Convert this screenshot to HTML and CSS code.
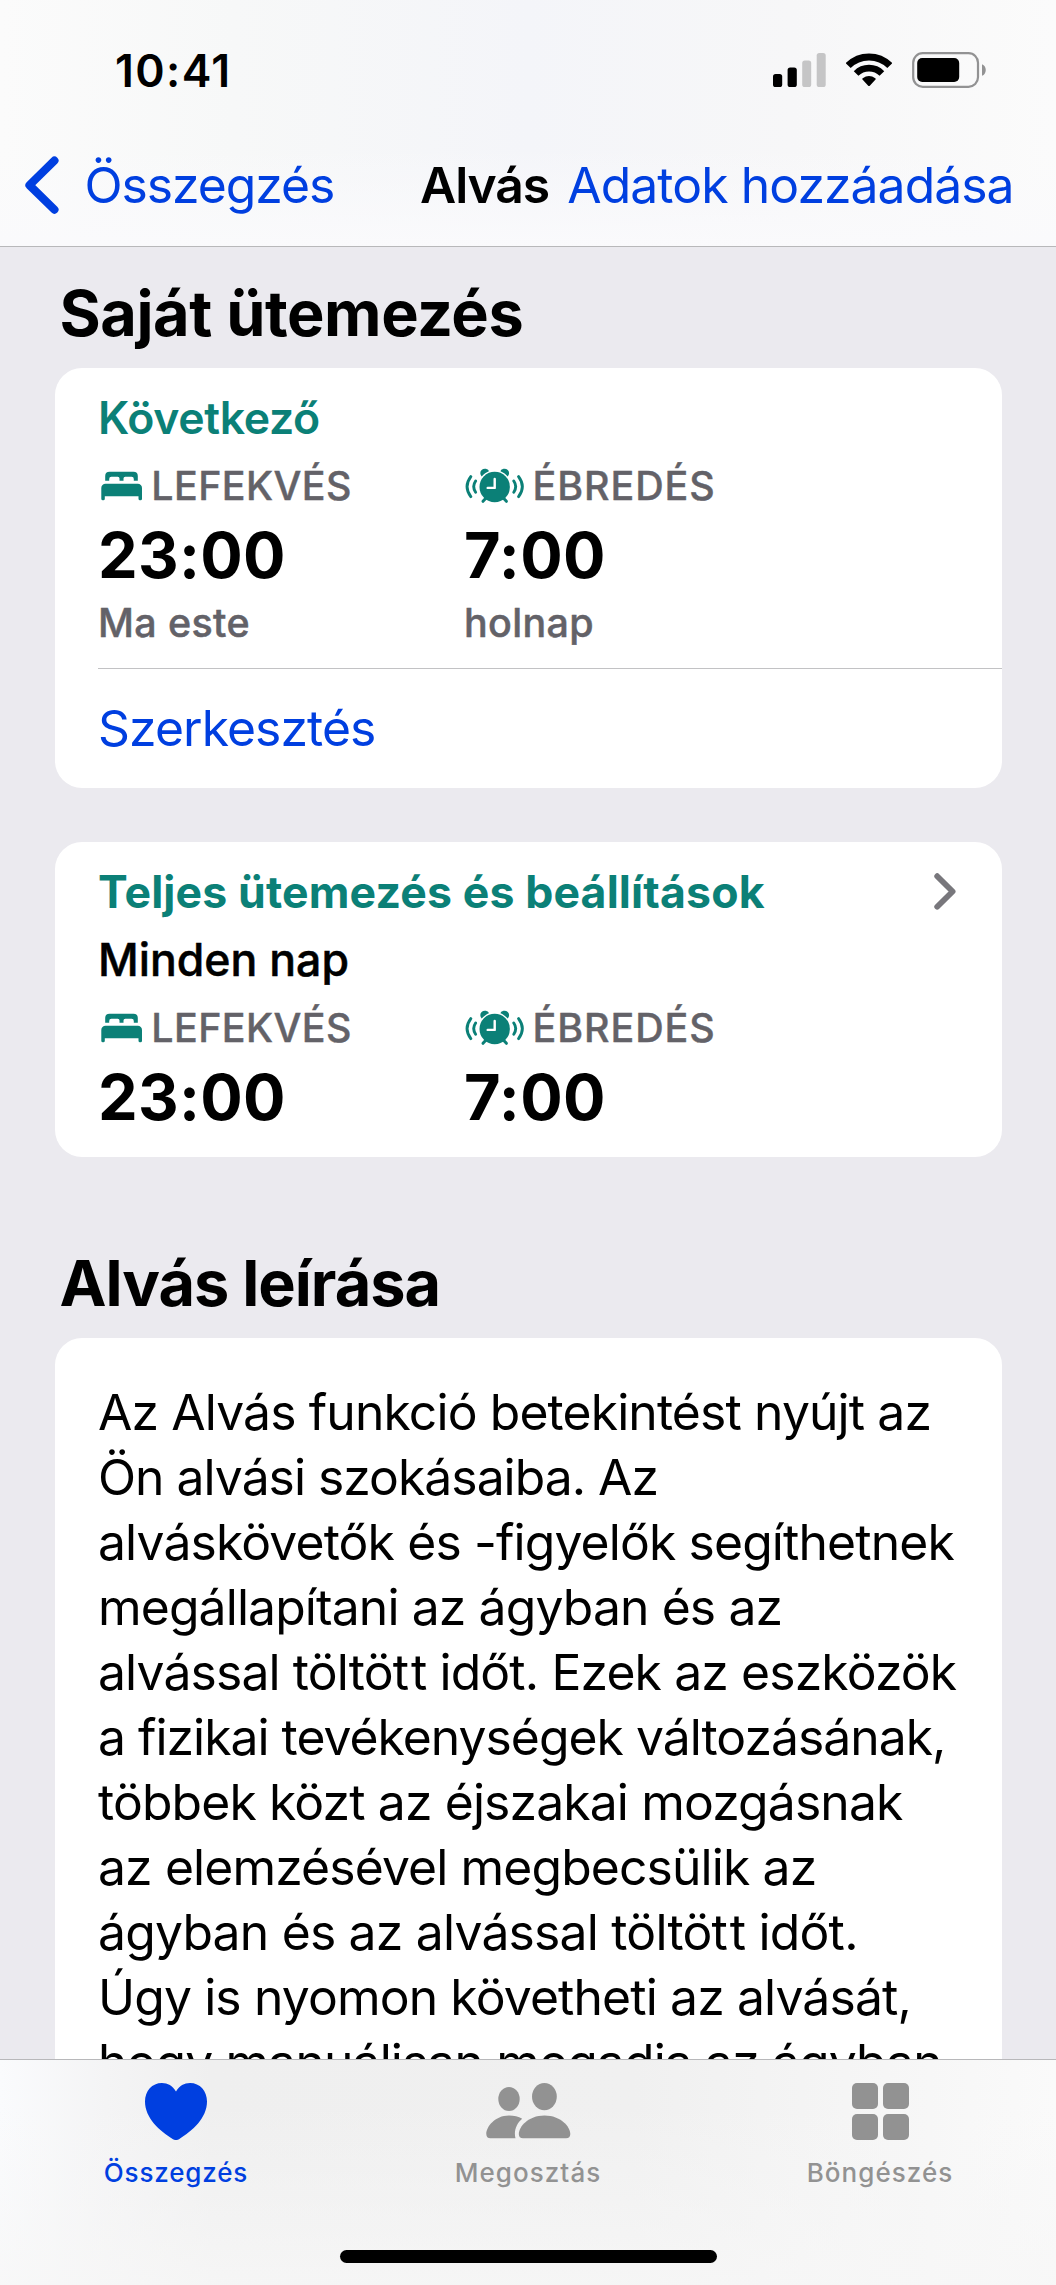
FILE: index.html
```
<!DOCTYPE html>
<html lang="hu">
<head>
<meta charset="utf-8">
<title>Alvás</title>
<link rel="stylesheet" href="styles.css">
</head>
<body>
<svg class="symbols" aria-hidden="true">
  <symbol id="bed" viewBox="0 0 42 30">
    <path fill="currentColor" d="M4.2 9.8V5A4.3 4.3 0 0 1 8.5.8h24A4.3 4.3 0 0 1 36.800 5v4.800h-4V7.900a2.200 2.200 0 0 0-2.200-2.200h-6.300a1.800 1.800 0 0 0-1.800 1.800v2.300h-4V7.500a1.800 1.800 0 0 0-1.800-1.800h-6.300a2.200 2.200 0 0 0-2.200 2.200v1.900z"/>
    <path fill="currentColor" d="M.3 17a4.200 4.200 0 0 1 4.200-4.200h32.300A4.200 4.200 0 0 1 41 17v10.700a1.500 1.500 0 0 1-1.500 1.500H39a1.500 1.500 0 0 1-1.500-1.500V25.300H3.800v2.400a1.500 1.500 0 0 1-1.500 1.500h-.5a1.500 1.500 0 0 1-1.500-1.500z"/>
  </symbol>
  <symbol id="alarm" viewBox="0 0 60 36">
    <g fill="none" stroke="currentColor" stroke-width="2.900" stroke-linecap="round">
      <path d="M5.800 8.600Q-1.700 18.600 5.800 28.700M10.600 13Q6.800 18.600 10.600 24.200M53.600 8.600Q61.100 18.600 53.600 28.700M48.800 13Q52.600 18.600 48.800 24.200"/>
      <path stroke-width="3" d="M20.600 30.500 18 33.300M38.800 30.500 41.400 33.300"/>
    </g>
    <g fill="currentColor">
      <circle cx="29.700" cy="19" r="15.200"/>
      <path d="M16.700 8.600C13 4 17.300-.6 22 1.200c1.100.4 1.800 1.200 1.900 2-2.600 1-5 2.800-7.200 5.400zM42.700 8.600C46.400 4 42.100-.6 37.400 1.200c-1.100.4-1.800 1.200-1.900 2 2.600 1 5 2.800 7.200 5.400z"/>
    </g>
    <path fill="none" stroke="#fff" stroke-width="2.400" stroke-linecap="round" stroke-linejoin="round" d="M29.700 11v8.900H22.700"/>
  </symbol>
</svg>

<div class="screen">
  <header class="header">
    <div class="status">
      <span class="clock">10:41</span>
      <div class="indicators">
        <svg width="53" height="36" viewBox="0 0 53 36">
          <rect x="0" y="22" width="9.200" height="13" rx="2.600"/>
          <rect x="14.600" y="15.500" width="9.200" height="19.500" rx="2.600"/>
          <rect x="29.200" y="8.500" width="9" height="26.500" rx="2.600" fill="#c5c5c6"/>
          <rect x="43.700" y="1" width="9" height="34" rx="2.600" fill="#c5c5c6"/>
        </svg>
        <svg width="46" height="36" viewBox="0 0 46 36">
          <g fill="none" stroke="#000">
            <path stroke-width="7" d="M2.200 13.600A29.400 29.400 0 0 1 43.800 13.600"/>
            <path stroke-width="6.600" d="M10.100 21.500A18.200 18.200 0 0 1 35.900 21.500"/>
          </g>
          <path d="M16.500 27.600Q15.700 26.800 16.700 26.200Q23 21.800 29.300 26.200Q30.300 26.800 29.500 27.600L23.800 33.700Q23 34.500 22.200 33.700z"/>
        </svg>
        <svg width="75" height="36" viewBox="0 0 75 36">
          <rect x="1.200" y="1.200" width="64.800" height="33.600" rx="9.500" fill="none" stroke="#929293" stroke-width="2.200"/>
          <rect x="5.200" y="6" width="42" height="24" rx="5"/>
          <path fill="#929293" d="M70 12.200c5 1.800 5 9.800 0 11.600z"/>
        </svg>
      </div>
    </div>
    <nav class="nav">
      <a class="back">
        <svg width="34" height="58" viewBox="0 0 34 58"><path d="M29.400 4.600 4.500 29.200 29.400 53.600" fill="none" stroke="currentColor" stroke-width="8.200" stroke-linecap="round" stroke-linejoin="round"/></svg>
        <span>Összegzés</span>
      </a>
      <h1 class="nav-title">Alvás</h1>
      <a class="add">Adatok hozzáadása</a>
    </nav>
  </header>

  <main class="content">
    <h2 class="heading">Saját ütemezés</h2>
    <section class="card">
      <div class="schedule">
        <h3 class="card-title next">Következő</h3>
        <div class="times">
          <div>
            <div class="label bedtime"><svg width="42" height="30"><use href="#bed"/></svg><span>LEFEKVÉS</span></div>
            <div class="time">23:00</div>
            <div class="day">Ma este</div>
          </div>
          <div>
            <div class="label wake"><svg width="60" height="36"><use href="#alarm"/></svg><span>ÉBREDÉS</span></div>
            <div class="time">7:00</div>
            <div class="day">holnap</div>
          </div>
        </div>
      </div>
      <a class="edit">Szerkesztés</a>
    </section>

    <section class="card full">
      <div class="title-row">
        <h3 class="card-title">Teljes ütemezés és beállítások</h3>
        <svg width="22" height="37" viewBox="0 0 22 37"><path d="M3.200 3.200 18.600 18.500 3.200 33.700" fill="none" stroke="#78777c" stroke-width="5.800" stroke-linecap="round" stroke-linejoin="round"/></svg>
      </div>
      <div class="repeat">Minden nap</div>
      <div class="times">
        <div>
          <div class="label bedtime"><svg width="42" height="30"><use href="#bed"/></svg><span>LEFEKVÉS</span></div>
          <div class="time">23:00</div>
        </div>
        <div>
          <div class="label wake"><svg width="60" height="36"><use href="#alarm"/></svg><span>ÉBREDÉS</span></div>
          <div class="time">7:00</div>
        </div>
      </div>
    </section>

    <h2 class="heading about-heading">Alvás leírása</h2>
    <section class="card about">
      <p>Az Alvás funkció betekintést nyújt az<br>
      <span class="tight">Ön alvási szokásaiba. Az</span><br>
      alváskövetők és -figyelők segíthetnek<br>
      megállapítani az ágyban és az<br>
      alvással töltö<span class="pair">t</span>t időt. Ezek az eszközök<br>
      <span class="tight">a fizikai tevékenységek változásának,</span><br>
      többek közt az éjszakai mozgásnak<br>
      az elemzésével megbecsülik az<br>
      <span class="loose">ágyban és az alvással töltö<span class="pair">t</span>t időt.</span><br>
      Úgy is nyomon követheti az alvását,<br>
      hogy manuálisan megadja az ágyban</p>
    </section>
  </main>

  <footer class="footer">
    <div class="tabs">
      <a class="tab active">
        <svg width="62" height="57" viewBox="0 0 62 57"><path fill="currentColor" d="M31 8.600C27.600 2.800 22.700 0 17 0 7 0 0 7.800 0 18.600 0 35 14.500 48 28 56.200Q31 57.900 34 56.200C47.500 48 62 35 62 18.600 62 7.800 55 0 45 0 39.300 0 34.400 2.800 31 8.600z"/></svg>
        <span>Összegzés</span>
      </a>
      <a class="tab">
        <svg width="85" height="57" viewBox="0 0 85 57">
          <g fill="currentColor">
            <ellipse cx="23" cy="16" rx="10.700" ry="12"/>
            <ellipse cx="58.400" cy="13.600" rx="12.400" ry="13.600"/>
            <path d="M4.500 55.200Q.3 55.200.3 51C.3 44 8.800 32.500 23 32.500Q30.500 32.500 36.200 35.700C30.500 40 27.500 48.500 29.500 55.200z"/>
            <path d="M37 55.200Q32.800 55.200 32.800 51C32.800 44 42 32.500 58.500 32.500S84.300 44 84.300 51Q84.300 55.200 80 55.200z"/>
          </g>
        </svg>
        <span>Megosztás</span>
      </a>
      <a class="tab">
        <svg width="57" height="57" viewBox="0 0 57 57">
          <g fill="currentColor">
            <rect width="26" height="26" rx="5"/><rect x="31" width="26" height="26" rx="5"/>
            <rect y="31" width="26" height="26" rx="5"/><rect x="31" y="31" width="26" height="26" rx="5"/>
          </g>
        </svg>
        <span>Böngészés</span>
      </a>
    </div>
    <div class="home-indicator"></div>
  </footer>
</div>
</body>
</html>
```
FILE: styles.css
```
* { box-sizing: border-box; }

body {
  margin: 0;
  font-family: Inter, "Liberation Sans", sans-serif;
  color: #000;
}

h1, h2, h3, p { margin: 0; }
svg { display: block; flex: none; }
.symbols { display: none; }

.screen {
  display: flex;
  flex-direction: column;
  width: 1056px;
  height: 2285px;
  overflow: hidden;
  background: #ebeaef;
}

/* Header */
.header {
  flex: none;
  height: 247px;
  padding-top: 40.5px;
  border-bottom: 1px solid #b8b8ba;
  background:
    linear-gradient(180deg, rgba(250, 250, 252, 0) 60%, #fafafc 100%),
    linear-gradient(90deg, #fbfbfb 0%, #f7f8f8 22%, #f4f5f9 50%, #f7f7f8 75%, #fbfbfb 100%);
}

.status {
  display: flex;
  justify-content: space-between;
  height: 60px;
  padding: 0 69px 0 115px;
}

.clock {
  font-size: 44.6px;
  font-weight: 600;
  line-height: 60px;
  letter-spacing: 1.38px;
}

.indicators {
  display: flex;
  gap: 20px;
  padding-top: 11.5px;
}

.nav {
  display: grid;
  grid-template-columns: 395px 147.3px auto;
  height: 60px;
  margin-top: 54px;
  padding-left: 25px;
  font-size: 49.8px;
  line-height: 60px;
  white-space: nowrap;
}

.back {
  display: flex;
  align-items: center;
  gap: 25.5px;
  color: #003fe0;
  letter-spacing: -1.05px;
}

.nav-title {
  font-size: inherit;
  font-weight: 600;
  letter-spacing: -1.1px;
}

.add {
  color: #003fe0;
  letter-spacing: -0.92px;
}

/* Content */
.content {
  flex: 1;
  min-height: 0;
  overflow: hidden;
  padding: 27.6px 54px 0 54.500px;
}

.heading {
  padding-left: 5px;
  margin-bottom: 17.4px;
  font-size: 63px;
  font-weight: 700;
  line-height: 76px;
  letter-spacing: -0.45px;
}

.card {
  padding-left: 43.500px;
  border-radius: 27px;
  background: #fff;
}

.schedule {
  padding: 22.8px 0 20.2px;
  border-bottom: 1px solid #c2c2c4;
}

.card-title {
  color: #0b8077;
  font-size: 44.6px;
  font-weight: 700;
  line-height: 54px;
  letter-spacing: 0.14px;
}

.next {
  font-weight: 600;
  letter-spacing: -0.36px;
}

.times {
  display: grid;
  grid-template-columns: 366px 1fr;
  margin-top: 16px;
}

.label {
  display: flex;
  align-items: center;
  height: 50px;
  color: #636268;
  font-size: 39.4px;
  font-weight: 500;
  line-height: 50px;
  -webkit-text-stroke: 0.4px;
}

.label svg { color: #0b8077; }
.bedtime { gap: 8.300px; padding-left: 3px; letter-spacing: 0.42px; }
.wake { gap: 7.500px; padding-left: 1px; letter-spacing: 0.95px; }

.time {
  margin-top: 6px;
  font-size: 63px;
  font-weight: 700;
  line-height: 76px;
  letter-spacing: 0.3px;
}

.day {
  margin-top: 5px;
  color: #636268;
  font-size: 39.4px;
  font-weight: 500;
  line-height: 50px;
  letter-spacing: 0.37px;
  -webkit-text-stroke: 0.5px;
}

.edit {
  display: flex;
  align-items: center;
  height: 119px;
  color: #003fe0;
  font-size: 49.8px;
  letter-spacing: -0.91px;
}

.full {
  margin-top: 54px;
  padding-top: 22.8px;
  padding-bottom: 22.2px;
}

.title-row {
  display: flex;
  align-items: center;
  justify-content: space-between;
  padding-right: 46px;
}

.repeat {
  margin-top: 14px;
  font-size: 44.6px;
  font-weight: 500;
  line-height: 54px;
  -webkit-text-stroke: 0.5px;
}

.about-heading {
  margin-top: 88px;
  letter-spacing: -1px;
}

.about {
  height: 760px;
  padding-top: 41.4px;
}

.about p {
  font-size: 49.8px;
  line-height: 65.05px;
  letter-spacing: -0.86px;
  white-space: nowrap;
}

.tight { letter-spacing: -0.98px; }
.loose { letter-spacing: -0.78px; }
.pair { letter-spacing: 2px; }

/* Tab bar */
.footer {
  display: flex;
  flex-direction: column;
  flex: none;
  height: 226px;
  border-top: 1px solid #b8b8ba;
  background:
    linear-gradient(180deg, rgba(247, 247, 247, 0) 20%, rgba(247, 247, 247, 0.8) 100%),
    linear-gradient(90deg, #fafbfd 0%, #f4f4f5 10%, #efefef 20%, #f0f0f0 60%, #f5f5f5 80%, #fafafa 100%);
}

.tabs {
  display: grid;
  grid-template-columns: repeat(3, 352px);
  padding-top: 23px;
}

.tab {
  display: flex;
  flex-direction: column;
  align-items: center;
  gap: 16.5px;
  color: #929292;
  font-size: 26px;
  font-weight: 500;
  line-height: 32px;
  letter-spacing: 1.05px;
}

.active {
  color: #003fe0;
  letter-spacing: 0.85px;
}

.home-indicator {
  width: 377px;
  height: 13px;
  margin: auto auto 22px;
  border-radius: 7px;
  background: #000;
}
```
